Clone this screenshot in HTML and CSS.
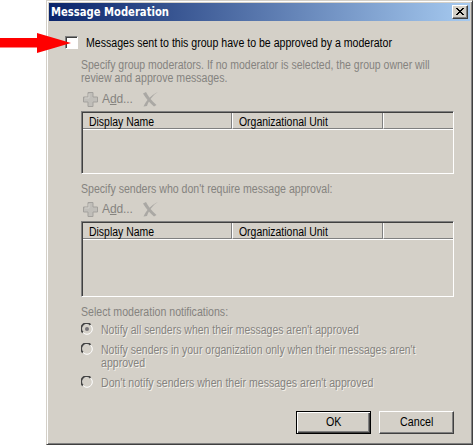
FILE: index.html
```
<!DOCTYPE html>
<html lang="en">
<head>
<meta charset="utf-8">
<title>Message Moderation</title>
<link rel="stylesheet" href="styles.css">
</head>
<body>
<svg class="arrow" width="72" height="22" viewBox="0 0 72 22"><path d="M0 6H37V1L71 11L37 21V15.500H0Z" fill="#f00"/></svg>
<main class="dialog">
  <header class="titlebar">
    <h1>Message Moderation</h1>
    <button class="close" aria-label="Close"><svg width="8" height="7" viewBox="0 0 8 7"><path d="M0 0h2v1h1v1h2V1h1V0h2v1H7v1H6v1H5v1h1v1h1v1h1v1H6V6H5V5H3v1H2v1H0V6h1V5h1V4h1V3H2V2H1V1H0z"/></svg></button>
  </header>
  <div class="content">
    <label class="check"><span class="box"></span><span class="t t-main">Messages sent to this group have to be approved by a moderator</span></label>
    <section class="group">
      <p><span class="t t-spec">Specify group moderators. If no moderator is selected, the group owner will</span><br><span class="t">review and approve messages.</span></p>
      <div class="tools">
        <svg width="17" height="17" viewBox="0 0 17 17"><path d="M6 1.500h5V6h4.500v5H11v4.500H6V11H1.500V6H6z" fill="#c0beb9" stroke="#a3a19d"/><path d="M7 3v4H3" fill="none" stroke="#d0cec9"/></svg>
        <span class="t-add">A<u>d</u>d...</span>
        <svg class="del" width="17" height="17" viewBox="0 0 17 17"><path d="M1 2.500L4 1C6 5 9 9 14.500 14L12 15.500C8 12 4 8 1 2.500zM16 1C11 4 7 9 5 15L1.500 15.500C4 10 9 4 16 1z" fill="#aaa8a4"/></svg>
      </div>
      <div class="list first">
        <div class="row"><span class="c1"><span class="t t-col">Display Name</span></span><span class="c2"><span class="t t-col">Organizational Unit</span></span><span class="c3"></span></div>
      </div>
      <p class="senders"><span class="t">Specify senders who don't require message approval:</span></p>
      <div class="tools second">
        <svg width="17" height="17" viewBox="0 0 17 17"><path d="M6 1.500h5V6h4.500v5H11v4.500H6V11H1.500V6H6z" fill="#c0beb9" stroke="#a3a19d"/><path d="M7 3v4H3" fill="none" stroke="#d0cec9"/></svg>
        <span class="t-add">A<u>d</u>d...</span>
        <svg class="del" width="17" height="17" viewBox="0 0 17 17"><path d="M1 2.500L4 1C6 5 9 9 14.500 14L12 15.500C8 12 4 8 1 2.500zM16 1C11 4 7 9 5 15L1.500 15.500C4 10 9 4 16 1z" fill="#aaa8a4"/></svg>
      </div>
      <div class="list">
        <div class="row"><span class="c1"><span class="t t-col">Display Name</span></span><span class="c2"><span class="t t-col">Organizational Unit</span></span><span class="c3"></span></div>
      </div>
      <p class="select"><span class="t">Select moderation notifications:</span></p>
      <label class="radio r1"><svg width="12" height="12" viewBox="0 0 12 12"><circle cx="6" cy="6" r="5.300" fill="none" stroke="#fff"/><path d="M1.800 9.500A5.200 5.200 0 0 1 9.500 1.800" fill="none" stroke="#444" stroke-width="1.800"/><circle cx="6" cy="6" r="2" fill="#77757a"/></svg><span class="t t-radio">Notify all senders when their messages aren't approved</span></label>
      <label class="radio r2"><svg width="12" height="12" viewBox="0 0 12 12"><circle cx="6" cy="6" r="5.300" fill="none" stroke="#fff"/><path d="M1.800 9.500A5.200 5.200 0 0 1 9.500 1.800" fill="none" stroke="#444" stroke-width="1.800"/></svg><span><span class="t t-radio">Notify senders in your organization only when their messages aren't</span><br><span class="t">approved</span></span></label>
      <label class="radio r3"><svg width="12" height="12" viewBox="0 0 12 12"><circle cx="6" cy="6" r="5.300" fill="none" stroke="#fff"/><path d="M1.800 9.500A5.200 5.200 0 0 1 9.500 1.800" fill="none" stroke="#444" stroke-width="1.800"/></svg><span class="t">Don't notify senders when their messages aren't approved</span></label>
    </section>
    <footer class="actions"><button class="btn ok"><span>OK</span></button><button class="btn cancel"><span>Cancel</span></button></footer>
  </div>
</main>
</body>
</html>
```
FILE: styles.css
```
* { box-sizing: border-box; }
body {
  margin: 0;
  width: 473px;
  height: 445px;
  overflow: hidden;
  background: #fff;
  font: 12px/13px "Liberation Sans", Arial, sans-serif;
}
.arrow { position: absolute; left: 0; top: 32px; z-index: 2; }
.dialog {
  width: 427px;
  height: 445px;
  margin-left: 46px;
  padding: 1px;
  background: #d4d0c8;
  border: 1px solid;
  border-color: #d4d0c8 #404040 #404040 #d4d0c8;
  box-shadow: inset 1px 1px #fff, inset -1px -1px #808080;
}
.titlebar {
  display: flex;
  align-items: center;
  justify-content: space-between;
  height: 18px;
  margin: 1px 1px 0;
  padding: 0 2px;
  background: linear-gradient(90deg, #0a246a, #a6caf0);
}
h1 {
  margin: 0;
  color: #fff;
  font: bold 12px/18px "DejaVu Sans Condensed", "DejaVu Sans", sans-serif;
  transform: scaleX(.93);
  transform-origin: 0 50%;
}
.close {
  display: flex;
  align-items: center;
  justify-content: center;
  width: 16px;
  height: 14px;
  padding: 0 1px 1px 0;
  background: #d4d0c8;
  border: 1px solid;
  border-color: #fff #404040 #404040 #fff;
  box-shadow: inset -1px -1px #808080;
}
.content { padding: 15px 17px 0 18px; }
.check { display: flex; gap: 9px; height: 13px; margin-left: -1px; }
.box {
  width: 13px;
  height: 13px;
  background: #fff;
  border: 1px solid;
  border-color: #808080 #fff #fff #808080;
  box-shadow: inset 1px 1px #404040;
}
.group { padding-left: 15px; color: #85837f; }
p { margin: 10px 0 0; height: 26px; }
span { white-space: nowrap; }

/* Narrow dialog lettering */
.t { display: inline-block; transform: scaleX(.882); transform-origin: 0 50%; }
.t-main { padding-top: 1px; margin-left: -1px; }
.t-spec { transform: scaleX(.874); }
.t-col { transform: scaleX(.87); }
.t-radio { transform: scaleX(.874); }

.tools { display: flex; align-items: center; height: 17px; margin-top: 6px; padding-left: 1px; }
.tools span { margin-left: 3px; letter-spacing: -.1px; }
.tools .del { margin-left: 9px; }
.list {
  width: 373px;
  height: 76px;
  margin-top: 3px;
  border: 1px solid;
  border-color: #808080 #fff #fff #808080;
  box-shadow: inset 1px 1px #404040;
  padding: 1px 0 0 1px;
}
.list.first { height: 63px; }
.row { display: flex; height: 17px; color: #000; line-height: 18px; border-bottom: 1px solid #fff; }
.row > span { height: 16px; border-bottom: 1px solid #808080; }
.c1 { width: 149px; padding-left: 6px; border-right: 1px solid #808080; }
.c2 { width: 151px; padding-left: 6px; border-left: 1px solid #fff; border-right: 1px solid #808080; }
.c3 { flex: 1; border-left: 1px solid #fff; }
.senders { height: 13px; margin-top: 9px; }
.tools.second { margin-top: 5px; }
.select { height: 13px; margin-top: 9px; }
.radio { display: flex; gap: 8px; text-shadow: 1px 1px #f4f2ec; }
.r1 { margin-top: 5px; }
.r2, .r3 { margin-top: 7px; }
.radio svg { flex: none; margin-top: -1px; }
.actions { display: flex; justify-content: flex-end; gap: 8px; margin-top: 21px; }
.btn {
  width: 75px;
  height: 23px;
  padding: 0;
  color: #000;
  font: inherit;
  background: #d4d0c8;
  border: 1px solid;
  border-color: #fff #404040 #404040 #fff;
  box-shadow: inset -1px -1px #808080;
}
.btn span { display: inline-block; transform: scaleX(.89); }
.ok { border-color: #000; box-shadow: inset 1px 1px #fff, inset -1px -1px #404040, inset -2px -2px #808080; }
```
